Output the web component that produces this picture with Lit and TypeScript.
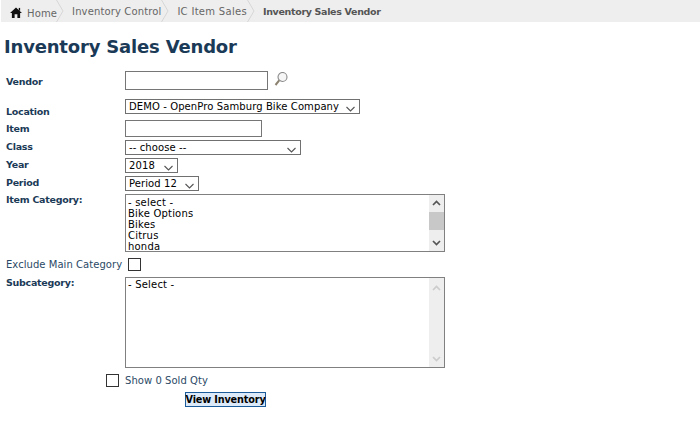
import { LitElement, html, css, svg } from "lit";
import { customElement } from "lit/decorators.js";

const chev = (up: boolean, color: string) => svg`<svg class="arrow" width="9" height="6" viewBox="0 0 9 6"><path d="${up ? "M1 5 L4.5 1.5 L8 5" : "M0.5 1 L4.5 5 L8.5 1"}" fill="none" stroke="${color}" stroke-width="${up ? 1.6 : 1.1}"/></svg>`;

const sbChev = (up: boolean, color: string) => svg`<svg width="9" height="6" viewBox="0 0 9 6"><path d="${up ? "M1 5 L4.5 1.5 L8 5" : "M1 1 L4.5 4.5 L8 1"}" fill="none" stroke="${color}" stroke-width="1.7"/></svg>`;

@customElement("app-root")
export class AppRoot extends LitElement {
  static styles = css`
    :host { display: block; width: 700px; height: 439px; background: #fff; font-family: "DejaVu Sans", Verdana, sans-serif; font-size: 10px; color: #000; overflow: hidden; }
    .crumbs { display: flex; height: 22px; margin-left: 1px; background: #eeeeee; color: #666; align-items: stretch; letter-spacing: 0.13px; }
    .crumb { display: flex; align-items: center; position: relative; padding: 0 8px 0 8px; }
    .crumb svg.sep { position: absolute; right: 0; top: 0; }
    .crumb.home { padding-left: 9px; padding-right: 7px; gap: 5px; }
    .crumb.home span { position: relative; top: 2px; }
    .crumb.first { padding-left: 8px; }
    .crumb.tight { letter-spacing: 0.3px; }
    .crumb.last { font-weight: bold; font-size: 9.5px; letter-spacing: -0.33px; color: #555; }
    h1 { margin: 15px 0 0 4px; font-size: 18px; letter-spacing: -0.18px; line-height: 20px; height: 20px; font-weight: bold; color: #1b3a57; }
    form { display: block; margin: 0; }
    .row { display: flex; align-items: flex-start; }
    .lab { width: 119px; margin-left: 6px; font-weight: bold; font-size: 9.5px; letter-spacing: -0.27px; color: #1b3a57; line-height: 12px; }
    .box { box-sizing: border-box; border: 1px solid #767676; background: #fff; display: flex; align-items: center; color: #000; }
    .select { height: 15px; border-color: #707070; padding: 0 0 1px 3px; justify-content: space-between; white-space: nowrap; line-height: 13px; letter-spacing: 0.1px; }
    .select .arrow { margin: 5px 4px 0 0; flex: none; }
    .list { border: 1px solid #808080; position: relative; width: 320px; box-sizing: border-box; display: flex; justify-content: space-between; align-items: stretch; letter-spacing: 0.2px; }
    .opts { padding: 2px 0 0 2px; line-height: 11px; }
    .opts.sub { padding-top: 1px; }
    .bar { width: 15px; background: #eeeeee; display: flex; flex-direction: column; align-items: center; justify-content: space-between; padding: 5px 0; box-sizing: border-box; position: relative; }
    .thumb { position: absolute; left: 0; width: 15px; top: 17px; height: 18px; background: #c8c8c8; }
    .check { box-sizing: border-box; width: 13px; height: 13px; border: 1px solid #333; background: #fff; flex: none; }
    .plain { color: #2b4a66; line-height: 13px; letter-spacing: 0.05px; }
    .btn { display: flex; align-items: center; justify-content: center; box-sizing: border-box; width: 81px; height: 15px; margin: 5px 0 0 185px; background: #dbe9f8; border: 1px solid #1c5b9a; font-weight: bold; font-size: 9.7px; letter-spacing: -0.15px; white-space: nowrap; color: #000; font-family: inherit; padding: 0; }
  `;

  render() {
    const sep = svg`<svg class="sep" width="8" height="22" viewBox="0 0 8 22"><path d="M0.5 0 L7 11 L0.5 22" fill="none" stroke="#d6d6d6" stroke-width="1"/></svg>`;
    return html`
      <nav class="crumbs">
        <div class="crumb home">
          <svg width="12" height="11" viewBox="0 0 13 12" style="position:relative;top:1px"><path d="M6.5 0.5 L13 6.5 L11 6.5 L11 12 L8 12 L8 8 L5 8 L5 12 L2 12 L2 6.5 L0 6.5 Z" fill="#111"/><rect x="9.5" y="1" width="1.5" height="3" fill="#111"/></svg>
          <span>Home</span>${sep}
        </div>
        <div class="crumb first">Inventory Control${sep}</div>
        <div class="crumb tight">IC Item Sales${sep}</div>
        <div class="crumb last">Inventory Sales Vendor</div>
      </nav>
      <h1>Inventory Sales Vendor</h1>
      <form>
        <div class="row" style="margin-top:14px">
          <div class="lab" style="margin-top:5px">Vendor</div>
          <div class="box" style="width:143px;height:19px"></div>
          <svg style="margin:1px 0 0 6px" width="14" height="15" viewBox="0 0 14 15"><circle cx="8.5" cy="5" r="4.5" fill="#f6f6f6" stroke="#8a8a8a" stroke-width="1.1"/><path d="M5.2 8.4 L1.5 13" stroke="#8c8270" stroke-width="2"/></svg>
        </div>
        <div class="row" style="margin-top:9px">
          <div class="lab" style="margin-top:7px">Location</div>
          <div class="box select" style="width:235px">DEMO - OpenPro Samburg Bike Company${chev(false, "#555")}</div>
        </div>
        <div class="row" style="margin-top:2px">
          <div class="lab" style="margin-top:3px">Item</div>
          <div class="box" style="width:137px;height:17px"></div>
        </div>
        <div class="row" style="margin-top:3px">
          <div class="lab" style="margin-top:1px">Class</div>
          <div class="box select" style="width:176px">-- choose --${chev(false, "#555")}</div>
        </div>
        <div class="row" style="margin-top:3px">
          <div class="lab" style="margin-top:1px">Year</div>
          <div class="box select" style="width:53px">2018${chev(false, "#555")}</div>
        </div>
        <div class="row" style="margin-top:3px">
          <div class="lab" style="margin-top:1px">Period</div>
          <div class="box select" style="width:74px">Period 12${chev(false, "#555")}</div>
        </div>
        <div class="row" style="margin-top:3px">
          <div class="lab" style="margin-top:0">Item Category:</div>
          <div class="list" style="height:58px">
            <div class="opts"><div>- select -</div><div>Bike Options</div><div>Bikes</div><div>Citrus</div><div>honda</div></div>
            <div class="bar"><div class="thumb"></div>${sbChev(true, "#555")}${sbChev(false, "#555")}</div>
          </div>
        </div>
        <div class="row" style="margin-top:6px;align-items:center">
          <div class="plain" style="margin-left:6px;width:122px">Exclude Main Category</div>
          <div class="check"></div>
        </div>
        <div class="row" style="margin-top:6px">
          <div class="lab" style="margin-top:0">Subcategory:</div>
          <div class="list" style="height:91px">
            <div class="opts sub"><div>- Select -</div></div>
            <div class="bar" style="padding:7px 0 5px">${sbChev(true, "#ccc")}${sbChev(false, "#ccc")}</div>
          </div>
        </div>
        <div class="row" style="margin:6px 0 0 106px;align-items:center">
          <div class="check"></div>
          <div class="plain" style="margin-left:6px">Show 0 Sold Qty</div>
        </div>
        <button type="button" class="btn">View Inventory</button>
      </form>
    `;
  }
}
